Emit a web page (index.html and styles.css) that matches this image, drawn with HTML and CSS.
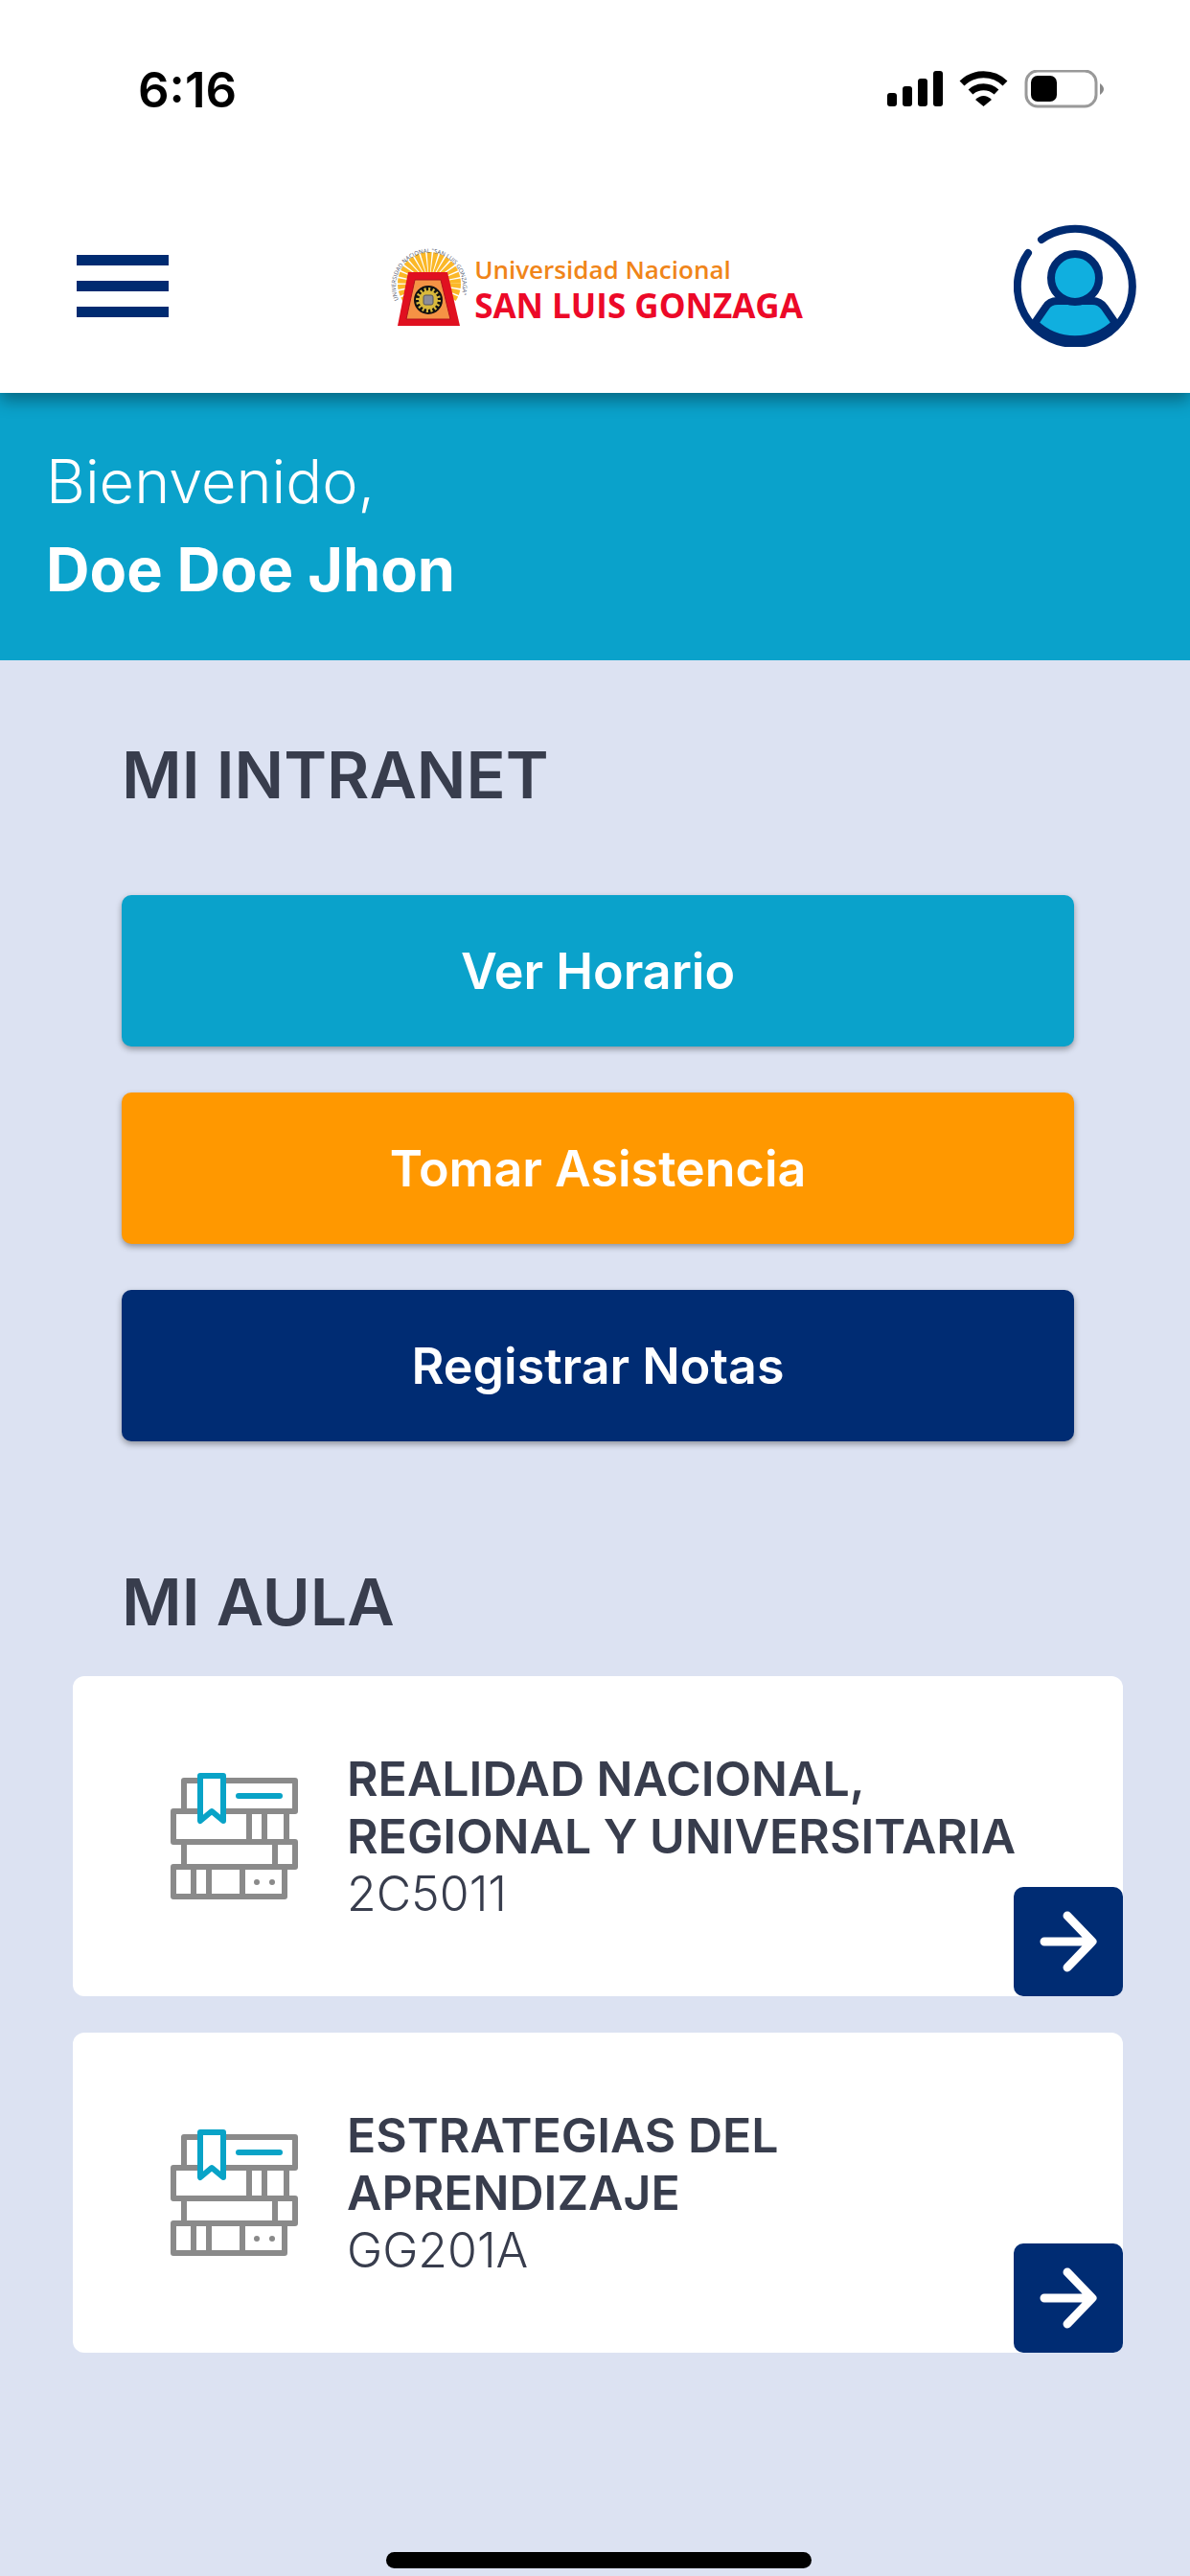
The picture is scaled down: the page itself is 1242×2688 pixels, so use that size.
FILE: index.html
```html
<!DOCTYPE html>
<html lang="es">
<head>
    <meta charset="UTF-8">
    <meta name="viewport" content="width=device-width, initial-scale=1.0">
    <title>Intranet - Universidad Nacional San Luis Gonzaga</title>
    <link rel="stylesheet" href="styles.css">
</head>
<body>
    <!-- Shared icons -->
    <svg class="sprite" aria-hidden="true">
        <symbol id="books" viewBox="0 0 134 134">
            <g fill="none" stroke="#8a8a8a" stroke-width="6" stroke-linejoin="round">
                <path d="M14 9H130V41H14Z"/>
                <path d="M3 41H121V73H3ZM82 41V73M98 41V73"/>
                <path d="M14 73H130V99H14ZM109 73V99"/>
                <path d="M3 99H119V130H3ZM24 99V130M40 99V130M75 99V130"/>
            </g>
            <circle cx="90" cy="115" r="3" fill="#8a8a8a"/>
            <circle cx="106" cy="115" r="3" fill="#8a8a8a"/>
            <path d="M31 4H55V51L43 41L31 51Z" fill="#fff" stroke="#09a3c7" stroke-width="6" stroke-linejoin="round"/>
            <path d="M71 25H114" stroke="#09a3c7" stroke-width="6" stroke-linecap="round"/>
        </symbol>
        <symbol id="arrow" viewBox="0 0 60 64">
            <path d="M5 32H54M29 5L55 32L29 59" fill="none" stroke="#fff" stroke-width="9" stroke-linecap="round" stroke-linejoin="round"/>
        </symbol>
    </svg>

    <header class="header">
        <div class="status-bar">
            <span class="time">6:16</span>
            <svg class="status-icons" viewBox="0 0 226 40" aria-hidden="true">
                <rect x="0" y="24" width="10" height="14" rx="3"/>
                <rect x="16" y="17" width="10" height="21" rx="3"/>
                <rect x="32" y="9" width="10" height="29" rx="3"/>
                <rect x="48" y="1" width="10" height="37" rx="3"/>
                <g fill="none" stroke="#000" stroke-width="7">
                    <path d="M78 14A32 32 0 0 1 123 14"/>
                    <path d="M87 23A20 20 0 0 1 114 23"/>
                </g>
                <path d="M92 31Q100.500 23 109 31L100.500 38Z"/>
                <rect x="145" y="1" width="73" height="37" rx="12" fill="none" stroke="#999" stroke-width="3"/>
                <rect x="150" y="6" width="27" height="27" rx="7"/>
                <path d="M222 14Q226 17 226 20Q226 23 222 26Z" fill="#888"/>
            </svg>
        </div>
        <nav class="navbar">
            <button class="menu-btn" aria-label="Menú">
                <span></span>
                <span></span>
                <span></span>
            </button>
            <a href="#" class="logo">
                <svg class="emblem" viewBox="0 0 80 84" aria-hidden="true">
                    <circle cx="40" cy="40" r="17" fill="none" stroke="#fbb828" stroke-width="32" stroke-dasharray="2.7 0.86"/>
                    <path id="arc" d="M8 57A35 35 0 1 1 72 57" fill="none"/>
                    <text class="emblem-text"><textPath href="#arc">UNIVERSIDAD NACIONAL "SAN LUIS GONZAGA"</textPath></text>
                    <path d="M0 84L8 59H72L80 84Z" fill="#fff"/>
                    <path d="M18 28H59L72 84H7Z" fill="#e01020"/>
                    <path d="M25 36H52L62 77H16Z" fill="#f59345" stroke="#b0121c" stroke-width="1"/>
                    <circle cx="39" cy="57" r="15" fill="#111"/>
                    <circle cx="39" cy="57" r="10" fill="#d9b93c"/>
                    <circle cx="39" cy="57" r="11" fill="none" stroke="#d9b93c" stroke-width="4" stroke-dasharray="2 2.3"/>
                    <rect x="34" y="52" width="10" height="10" rx="2" fill="#8b8d98" stroke="#55555f"/>
                </svg>
                <span class="logo-text">
                    <span class="logo-top">Universidad Nacional</span>
                    <strong class="logo-bottom">SAN LUIS GONZAGA</strong>
                </span>
            </a>
            <button class="user-btn" aria-label="Mi perfil">
                <svg viewBox="0 0 128 128" aria-hidden="true">
                    <g stroke="#002b71" stroke-width="8" stroke-linecap="round" stroke-linejoin="round">
                        <path d="M22 103L33 87Q37 80 46 80H82Q90 80 95 87L106 103A60 60 0 0 1 22 103Z" fill="#10afdf"/>
                        <circle cx="64" cy="56" r="25" fill="#10afdf"/>
                        <path d="M29 16A60 60 0 1 1 15 30" fill="none"/>
                    </g>
                </svg>
            </button>
        </nav>
    </header>

    <section class="welcome">
        <p>Bienvenido,</p>
        <p class="name">Doe Doe Jhon</p>
    </section>

    <main>
        <section class="intranet">
            <h2>MI INTRANET</h2>
            <button class="btn btn-blue">Ver Horario</button>
            <button class="btn btn-orange">Tomar Asistencia</button>
            <button class="btn btn-navy">Registrar Notas</button>
        </section>

        <section class="aula">
            <h2>MI AULA</h2>
            <article class="card">
                <svg class="books" aria-hidden="true"><use href="#books"/></svg>
                <div class="course">
                    <h3>REALIDAD NACIONAL,<br>REGIONAL Y UNIVERSITARIA</h3>
                    <p>2C5011</p>
                </div>
                <a href="#" class="go" aria-label="Ver curso"><svg><use href="#arrow"/></svg></a>
            </article>
            <article class="card">
                <svg class="books" aria-hidden="true"><use href="#books"/></svg>
                <div class="course">
                    <h3>ESTRATEGIAS DEL<br>APRENDIZAJE</h3>
                    <p>GG201A</p>
                </div>
                <a href="#" class="go" aria-label="Ver curso"><svg><use href="#arrow"/></svg></a>
            </article>
        </section>
    </main>

    <footer class="home-bar">
        <div class="home-indicator"></div>
    </footer>
</body>
</html>
```
FILE: styles.css
```css
* {
    box-sizing: border-box;
    margin: 0;
    padding: 0;
}

body {
    min-height: 100vh;
    display: flex;
    flex-direction: column;
    font-family: 'Inter', sans-serif;
    background-color: #dce2f2;
    color: #383d4d;
}

button {
    border: none;
    background: none;
    font-family: inherit;
    cursor: pointer;
}

.sprite {
    position: absolute;
    width: 0;
    height: 0;
}

/* Header */
.header {
    position: relative;
    z-index: 1;
    padding-top: 62px;
    background-color: #fff;
    box-shadow: 0 8px 16px rgba(0, 0, 0, 0.35);
}

.status-bar {
    display: flex;
    justify-content: space-between;
    align-items: center;
    height: 62px;
    padding: 0 90px 0 144px;
}

.time {
    font-size: 51px;
    font-weight: 600;
    color: #000;
}

.status-icons {
    width: 226px;
    height: 40px;
}

.navbar {
    display: flex;
    justify-content: space-between;
    align-items: center;
    height: 286px;
    padding: 62px 56px 0 80px;
}

.menu-btn {
    display: flex;
    flex-direction: column;
    gap: 16px;
    width: 96px;
}

.menu-btn span {
    height: 11px;
    background-color: #002b71;
}

.logo {
    display: flex;
    align-items: center;
    gap: 7px;
    margin-left: 12px;
    text-decoration: none;
}

.emblem {
    width: 80px;
    height: 84px;
    overflow: visible;
}

.emblem-text {
    font-family: 'Open Sans', sans-serif;
    font-size: 6px;
    fill: #4a5068;
}

.logo-text {
    display: flex;
    flex-direction: column;
    padding-top: 4px;
    font-family: 'Open Sans', sans-serif;
    line-height: 38px;
}

.logo-top {
    font-size: 26px;
    font-weight: 600;
    color: #f08519;
}

.logo-bottom {
    font-size: 35px;
    color: #ec0928;
}

.user-btn,
.user-btn svg {
    display: block;
    width: 128px;
    height: 128px;
}

/* Welcome banner */
.welcome {
    height: 279px;
    padding: 46px 48px;
    background-color: #0aa2cb;
    color: #fff;
    font-size: 63px;
    font-weight: 300;
    line-height: 92px;
}

.welcome .name {
    font-weight: 700;
}

/* Sections */
main {
    flex: 1;
    padding: 0 70px 0 76px;
}

h2 {
    font-size: 68px;
    font-weight: 600;
    line-height: 80px;
}

.intranet {
    display: flex;
    flex-direction: column;
    gap: 48px;
    padding: 79px 51px 0;
}

.intranet h2 {
    margin-bottom: 38px;
}

.btn {
    height: 158px;
    border-radius: 10px;
    box-shadow: 0 3px 6px rgba(0, 0, 0, 0.35);
    color: #fff;
    font-size: 52px;
    font-weight: 600;
}

.btn-blue {
    background-color: #0aa2cb;
}

.btn-orange {
    background-color: #ff9800;
}

.btn-navy {
    background-color: #002c73;
}

/* Courses */
.aula {
    display: flex;
    flex-direction: column;
    gap: 38px;
    padding-top: 127px;
}

.aula h2 {
    padding-left: 51px;
}

.card {
    position: relative;
    display: flex;
    align-items: center;
    gap: 50px;
    height: 334px;
    padding-left: 102px;
    border-radius: 12px;
    background-color: #fff;
}

.books {
    width: 134px;
    height: 134px;
}

.course {
    font-size: 50px;
    line-height: 60px;
}

.course h3 {
    font-size: inherit;
    font-weight: 600;
}

.course p {
    font-weight: 300;
}

.go {
    position: absolute;
    right: 0;
    bottom: 0;
    display: flex;
    justify-content: center;
    align-items: center;
    width: 114px;
    height: 114px;
    border-radius: 10px;
    background-color: #002c73;
}

.go svg {
    width: 60px;
    height: 64px;
}

.home-bar {
    padding: 0 0 8px 8px;
}

.home-indicator {
    width: 444px;
    height: 17px;
    margin: 0 auto;
    border-radius: 9px;
    background-color: #000;
}
```
